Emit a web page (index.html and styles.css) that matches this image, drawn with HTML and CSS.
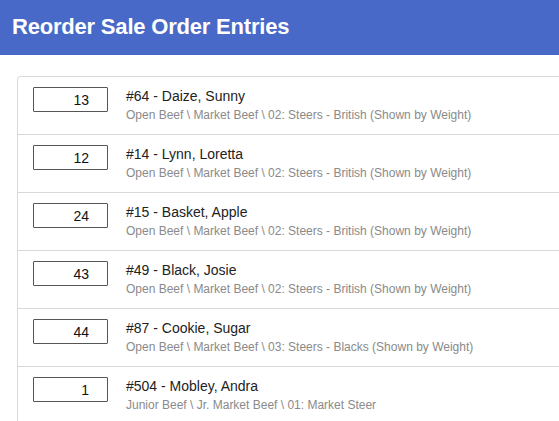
FILE: index.html
```html
<!DOCTYPE html>
<html lang="en">
<head>
    <meta charset="UTF-8">
    <meta name="viewport" content="width=device-width, initial-scale=1.0">
    <title>Reorder Sale Order Entries</title>
    <link rel="stylesheet" href="styles.css">
</head>
<body>
    <header class="topbar">
        <h1>Reorder Sale Order Entries</h1>
    </header>

    <ul class="entries">
        <li class="entry">
            <input type="text" class="order" value="13">
            <div class="info">
                <div class="name">#64 - Daize, Sunny</div>
                <div class="path">Open Beef \ Market Beef \ 02: Steers - British (Shown by Weight)</div>
            </div>
        </li>
        <li class="entry">
            <input type="text" class="order" value="12">
            <div class="info">
                <div class="name">#14 - Lynn, Loretta</div>
                <div class="path">Open Beef \ Market Beef \ 02: Steers - British (Shown by Weight)</div>
            </div>
        </li>
        <li class="entry">
            <input type="text" class="order" value="24">
            <div class="info">
                <div class="name">#15 - Basket, Apple</div>
                <div class="path">Open Beef \ Market Beef \ 02: Steers - British (Shown by Weight)</div>
            </div>
        </li>
        <li class="entry">
            <input type="text" class="order" value="43">
            <div class="info">
                <div class="name">#49 - Black, Josie</div>
                <div class="path">Open Beef \ Market Beef \ 02: Steers - British (Shown by Weight)</div>
            </div>
        </li>
        <li class="entry">
            <input type="text" class="order" value="44">
            <div class="info">
                <div class="name">#87 - Cookie, Sugar</div>
                <div class="path">Open Beef \ Market Beef \ 03: Steers - Blacks (Shown by Weight)</div>
            </div>
        </li>
        <li class="entry">
            <input type="text" class="order" value="1">
            <div class="info">
                <div class="name">#504 - Mobley, Andra</div>
                <div class="path">Junior Beef \ Jr. Market Beef \ 01: Market Steer</div>
            </div>
        </li>
    </ul>
</body>
</html>
```

FILE: styles.css
```css
body {
    font-family: "Liberation Sans", Arial, sans-serif;
    margin: 0;
    background-color: #fff;
    color: #222;
    overflow: hidden;
}
.topbar {
    background-color: #4869c7;
    height: 55px;
    display: flex;
    align-items: center;
    padding: 0 12px;
}
.topbar h1 {
    margin: 0;
    color: #fff;
    font-size: 22px;
    font-weight: bold;
    letter-spacing: -0.2px;
    padding-bottom: 2px;
}
/* list runs off the right edge, so no right border */
.entries {
    list-style: none;
    margin: 21px 0 0 17px;
    padding: 0;
    border: 1px solid #d9d9d9;
    border-right: none;
    border-radius: 4px 0 0 4px;
}
.entry {
    display: flex;
    align-items: flex-start;
    height: 58px;
    padding: 10px 0 0 15px;
    box-sizing: border-box;
    border-bottom: 1px solid #d9d9d9;
}
.entry:last-child {
    border-bottom: none;
}
.order {
    width: 75px;
    height: 25px;
    box-sizing: border-box;
    border: 1px solid #555;
    border-radius: 1px;
    padding: 0 18px 0 4px;
    text-align: right;
    font-family: inherit;
    font-size: 14px;
    color: #111;
}
.info {
    margin-left: 18px;
    padding-top: 1px;
}
.name {
    font-size: 14px;
    color: #222;
    line-height: 17px;
}
.path {
    font-size: 12px;
    color: #8a8a8a;
    line-height: 15px;
    margin-top: 3px;
}
```
